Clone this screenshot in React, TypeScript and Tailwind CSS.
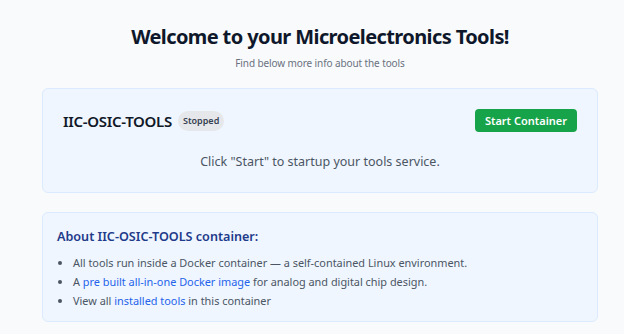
import React from "react";

export default function App() {
  return (
    <div
      className="min-h-[334px] w-full bg-[#f8fafc] pt-[23px]"
      style={{ fontFamily: '"Noto Sans", "Open Sans", sans-serif' }}
    >
      <div className="ml-[42px] w-[556px]">
        <h1 className="text-center text-[20px] font-bold leading-[28px] tracking-[-0.03em] text-[#0f172a]">
          Welcome to your Microelectronics Tools!
        </h1>
        <p className="mt-[4px] text-center text-[10px] leading-[16px] tracking-[-0.01em] text-[#6b7280]">
          Find below more info about the tools
        </p>

        <div className="mt-[17px] flex flex-col gap-5 rounded-md border border-[#dbeafe] bg-[#eff6ff] p-5">
          <div className="flex items-center justify-between">
            <div className="flex items-center gap-[6px]">
              <span className="text-[15px] font-semibold leading-[22px] tracking-[-0.02em] text-[#111827]">
                IIC-OSIC-TOOLS
              </span>
              <span className="rounded-full bg-[#e5e7eb] px-[5px] py-[2px] text-[9px] font-semibold leading-[16px] text-[#374151]">
                Stopped
              </span>
            </div>
            <button className="h-[23px] rounded-[4px] bg-[#16a34a] px-[10px] text-[11px] font-semibold leading-[23px] text-white">
              Start Container
            </button>
          </div>
          <p className="text-center text-[12.5px] leading-[20px] text-[#4b5563]">
            Click "Start" to startup your tools service.
          </p>
        </div>

        <div className="mt-[19px] rounded-md border border-[#dbeafe] bg-[#eff6ff] px-[14px] pb-[11px] pt-[14px]">
          <h2 className="text-[12.6px] font-semibold leading-[20px] text-[#1e3a8a]">
            About IIC-OSIC-TOOLS container:
          </h2>
          <ul className="mt-[6px] list-disc pl-4 text-[10.9px] leading-[19px] text-[#4b5563]">
            <li>All tools run inside a Docker container — a self-contained Linux environment.</li>
            <li>
              A <a className="text-[#2563eb]">pre built all-in-one Docker image</a> for analog and digital chip design.
            </li>
            <li>
              View all <a className="text-[#2563eb]">installed tools</a> in this container
            </li>
          </ul>
        </div>
      </div>
    </div>
  );
}
